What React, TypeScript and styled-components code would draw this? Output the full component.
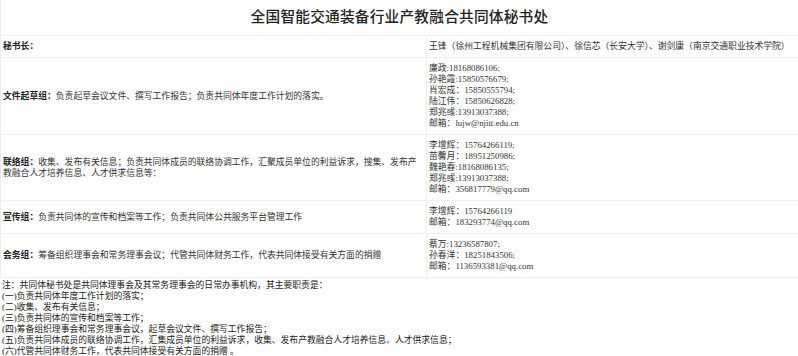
import React from 'react';
import styled, { createGlobalStyle } from 'styled-components';

const GlobalStyle = createGlobalStyle`
  body {
    margin: 0;
    background: #fff;
    font-family: "Liberation Serif", "Noto Sans CJK SC", serif;
    font-size: 8.8px;
    line-height: 11px;
    color: #333;
  }
`;

const Sheet = styled.div`
  width: 798px;
`;

const Table = styled.div`
  border-left: 1px solid #ececec;
`;

const Title = styled.div`
  height: 35px;
  display: flex;
  align-items: center;
  justify-content: center;
  border-bottom: 1px solid #eee;
  font-size: 14.7px;
  font-weight: 500;
  color: #222;
  letter-spacing: 0.2px;
`;

const Row = styled.div`
  display: grid;
  grid-template-columns: 426px 1fr;
  border-bottom: 1px solid #eee;
`;

const LabelCell = styled.div`
  box-sizing: border-box;
  display: flex;
  align-items: center;
  padding: 5px 3px 5px 2px;
  border-right: 1px solid #eee;
`;

const ValueCell = styled.div`
  padding: 5px 2px;
`;

const Strong = styled.b`
  color: #222;
`;

const Line = styled.div`
  white-space: nowrap;
`;

const Note = styled.div`
  padding: 2px 2px 0;
  color: #222;
`;

type Group = {
  label: string;
  duty: string;
  contacts: string[];
};

const groups: Group[] = [
  {
    label: '秘书长：',
    duty: '',
    contacts: ['王锋（徐州工程机械集团有限公司）、徐信芯（长安大学）、谢剑康（南京交通职业技术学院）'],
  },
  {
    label: '文件起草组：',
    duty: '负责起草会议文件、撰写工作报告；负责共同体年度工作计划的落实。',
    contacts: [
      '廉政:18168086106;',
      '孙艳霞:15850576679;',
      '肖宏成：15850555794;',
      '陆江伟：15850626828;',
      '郑兆彧:13913037388;',
      '邮箱：lujw@njitt.edu.cn',
    ],
  },
  {
    label: '联络组：',
    duty: '收集、发布有关信息；负责共同体成员的联络协调工作，汇聚成员单位的利益诉求，搜集、发布产教融合人才培养信息、人才供求信息等：',
    contacts: [
      '李增辉：15764266119;',
      '苗馨月：18951250986;',
      '魏艳春:18168086135;',
      '郑兆彧:13913037388;',
      '邮箱：356817779@qq.com',
    ],
  },
  {
    label: '宣传组：',
    duty: '负责共同体的宣传和档案等工作；负责共同体公共服务平台管理工作',
    contacts: ['李增辉：15764266119', '邮箱：183293774@qq.com'],
  },
  {
    label: '会务组：',
    duty: '筹备组织理事会和常务理事会议；代管共同体财务工作，代表共同体接受有关方面的捐赠',
    contacts: ['蔡万:13236587807;', '孙春洋：18251843506;', '邮箱：1136593381@qq.com'],
  },
];

const notes = [
  '注：共同体秘书处是共同体理事会及其常务理事会的日常办事机构，其主要职责是：',
  '(一)负责共同体年度工作计划的落实；',
  '(二)收集、发布有关信息；',
  '(三)负责共同体的宣传和档案等工作；',
  '(四)筹备组织理事会和常务理事会议，起草会议文件、撰写工作报告；',
  '(五)负责共同体成员的联络协调工作，汇集成员单位的利益诉求，收集、发布产教融合人才培养信息、人才供求信息；',
  '(六)代管共同体财务工作，代表共同体接受有关方面的捐赠 。',
];

const App: React.FC = () => {
  return (
    <Sheet>
      <GlobalStyle />
      <Table>
        <Title>全国智能交通装备行业产教融合共同体秘书处</Title>
        {groups.map(g => (
          <Row key={g.label}>
            <LabelCell>
              <span>
                <Strong>{g.label}</Strong>
                {g.duty}
              </span>
            </LabelCell>
            <ValueCell>
              {g.contacts.map(c => (
                <Line key={c}>{c}</Line>
              ))}
            </ValueCell>
          </Row>
        ))}
      </Table>
      <Note>
        {notes.map(n => (
          <Line key={n}>{n}</Line>
        ))}
      </Note>
    </Sheet>
  );
};

export default App;
